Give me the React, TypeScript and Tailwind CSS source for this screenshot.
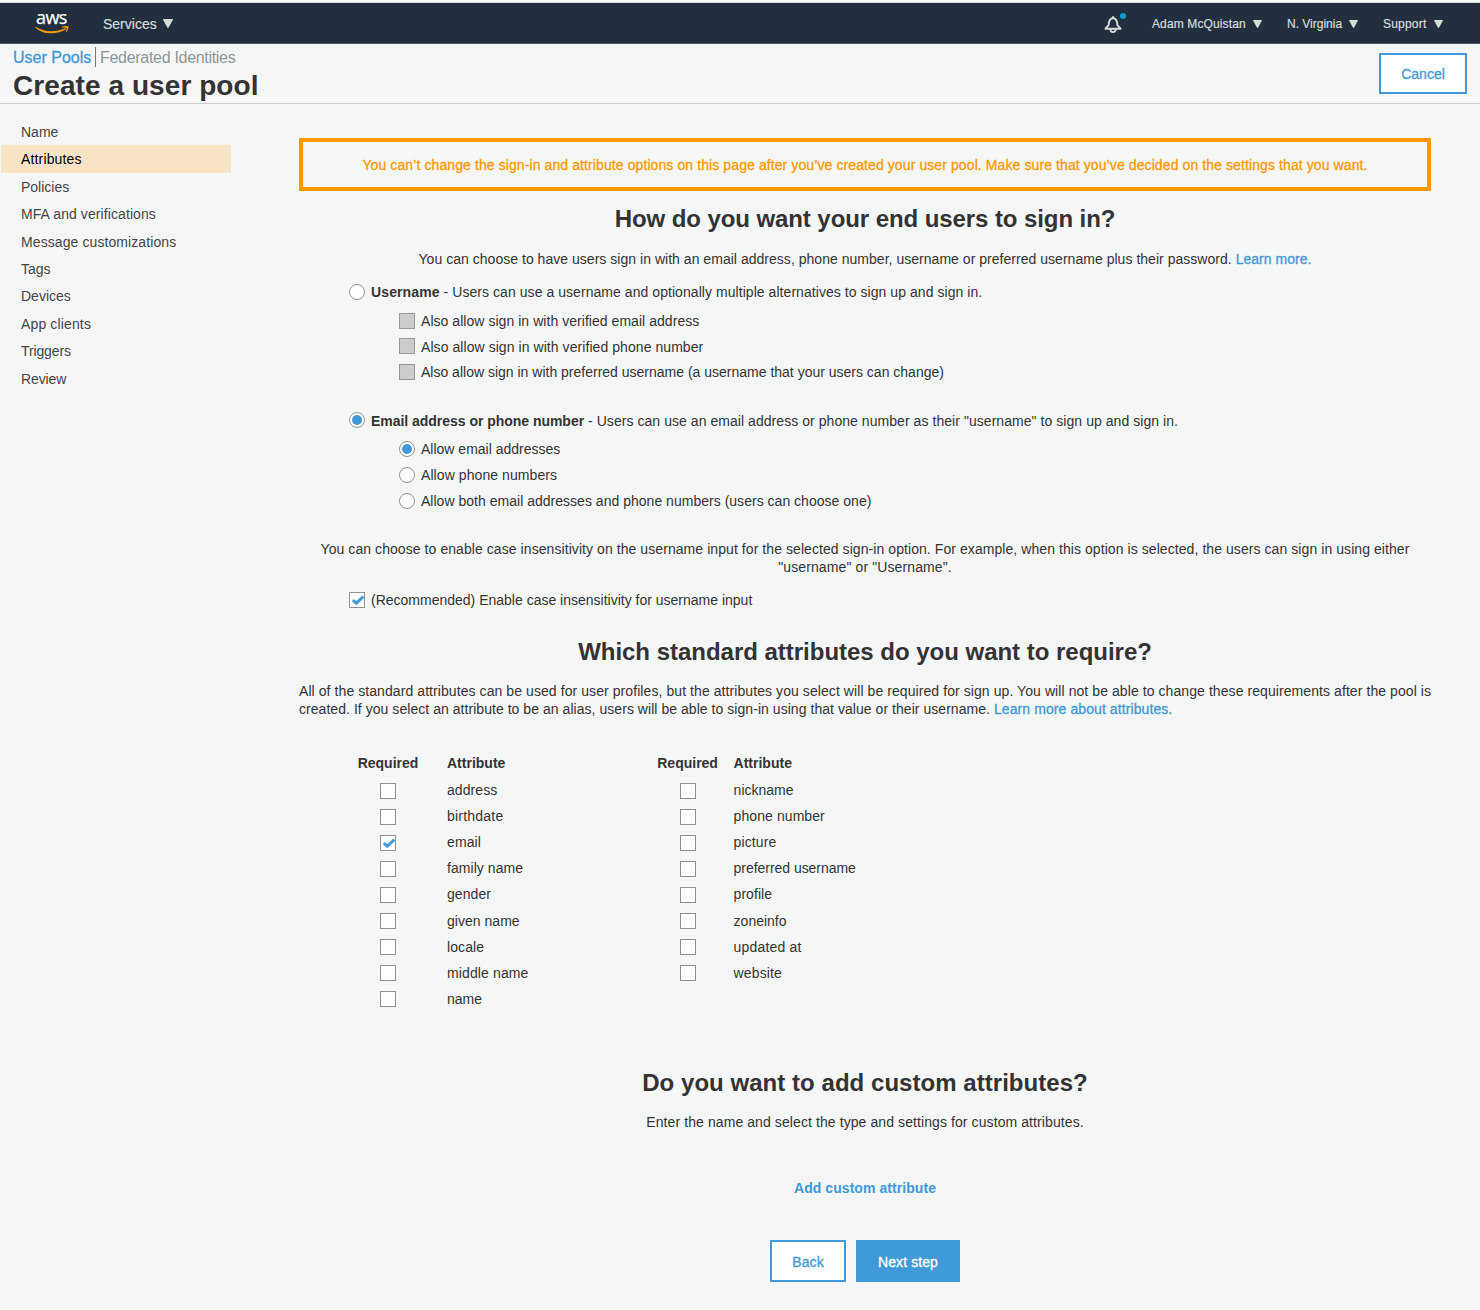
import React from 'react';

type Item = { label: string; track: string; checked?: boolean };

function Caret({ className }: { className: string }) {
  return (
    <svg viewBox="0 0 10 8" preserveAspectRatio="none" className={className} fill="currentColor">
      <path d="M0.6 0H9.4Q10.2 0 9.8 0.8L5.7 7.5Q5 8.4 4.3 7.5L0.2 0.8Q-0.2 0 0.6 0Z" />
    </svg>
  );
}

function Bell() {
  return (
    <svg width="22" height="22" viewBox="0 0 22 22" className="block">
      <path
        d="M3.4 14.7H18.6L15.4 11.2C15.2 7 14 4.2 11 4C8 4.2 6.8 7 6.6 11.2Z"
        fill="none"
        stroke="#d5dbdb"
        strokeWidth="1.9"
        strokeLinejoin="round"
      />
      <path d="M11 2.2V4" stroke="#d5dbdb" strokeWidth="2" />
      <path d="M8.4 15V15.6A2.6 2.5 0 0 0 13.6 15.6V15" fill="none" stroke="#d5dbdb" strokeWidth="1.9" />
    </svg>
  );
}

function AwsLogo() {
  return (
    <div className="h-[26px] w-[36px] shrink-0">
      <div className="h-[15px] pl-[1px] font-['Open_Sans',sans-serif] text-[18px] leading-[12px] font-medium tracking-[-0.6px] text-white [-webkit-text-stroke:0.25px]">
        aws
      </div>
      <svg width="36" height="10" viewBox="0 0 36 10" className="block">
        <path d="M0.7 0.7C9 6.1 20 6.7 30.2 2.2C31 1.9 31.5 2.7 30.8 3.3C22 9.2 8 8.8 0.5 1.4C0 0.9 0.3 0.5 0.7 0.7Z" fill="#f90" />
        <path d="M26.8 0.9C29 -0.3 33 -0.1 33.4 0.5C33.8 1.1 33 4.6 31.1 6.2C30.8 6.4 30.5 6.3 30.6 5.9C31.1 4.9 32 2.6 31.6 2C31.2 1.4 28.9 1.5 27.1 1.5C26.7 1.5 26.5 1.2 26.8 0.9Z" fill="#f90" />
      </svg>
    </div>
  );
}

function Check({ checked, disabled }: { checked?: boolean; disabled?: boolean }) {
  return (
    <span
      className={
        disabled
          ? 'block size-4 shrink-0 border border-[#999] bg-[#ccc]'
          : 'block size-4 shrink-0 border border-[#8d9494] bg-white'
      }
    >
      {checked && (
        <svg viewBox="0 0 14 14" className="block size-[14px]">
          <path d="M2.8 7.2L6.3 10.2L13.4 3.6" fill="none" stroke="#4099d8" strokeWidth="3" />
        </svg>
      )}
    </span>
  );
}

function Radio({ checked }: { checked?: boolean }) {
  return (
    <span className="flex size-4 shrink-0 items-center justify-center rounded-full border border-[#8d9494] bg-white">
      {checked && <span className="block size-[10px] rounded-full bg-[#4099d8]" />}
    </span>
  );
}

function AttributeTable({ items, cols }: { items: Item[]; cols: string }) {
  return (
    <div>
      <div className={`grid h-[27px] items-center font-bold ${cols}`}>
        <span className="text-center">Required</span>
        <span>Attribute</span>
      </div>
      {items.map((a) => (
        <div key={a.label} className={`grid h-[26.12px] items-center ${cols}`}>
          <span className="flex justify-center pt-[1.1px]">
            <Check checked={a.checked} />
          </span>
          <span className={a.track}>{a.label}</span>
        </div>
      ))}
    </div>
  );
}

const steps: Item[] = [
  { label: 'Name', track: '' },
  { label: 'Attributes', track: 'tracking-[0.15px]' },
  { label: 'Policies', track: '' },
  { label: 'MFA and verifications', track: 'tracking-[0.09px]' },
  { label: 'Message customizations', track: 'tracking-[0.09px]' },
  { label: 'Tags', track: '' },
  { label: 'Devices', track: '' },
  { label: 'App clients', track: 'tracking-[0.14px]' },
  { label: 'Triggers', track: 'tracking-[-0.13px]' },
  { label: 'Review', track: 'tracking-[-0.1px]' },
];

const left: Item[] = [
  { label: 'address', track: 'tracking-[0.08px]' },
  { label: 'birthdate', track: 'tracking-[0.22px]' },
  { label: 'email', track: 'tracking-[0.1px]', checked: true },
  { label: 'family name', track: 'tracking-[0.05px]' },
  { label: 'gender', track: 'tracking-[0.06px]' },
  { label: 'given name', track: 'tracking-[0.03px]' },
  { label: 'locale', track: 'tracking-[0.1px]' },
  { label: 'middle name', track: 'tracking-[0.12px]' },
  { label: 'name', track: '' },
];

const right: Item[] = [
  { label: 'nickname', track: '' },
  { label: 'phone number', track: 'tracking-[0.08px]' },
  { label: 'picture', track: 'tracking-[0.1px]' },
  { label: 'preferred username', track: 'tracking-[-0.04px]' },
  { label: 'profile', track: 'tracking-[0.04px]' },
  { label: 'zoneinfo', track: '' },
  { label: 'updated at', track: 'tracking-[0.17px]' },
  { label: 'website', track: 'tracking-[0.12px]' },
];

export default function App() {
  return (
    <div className="flex h-[1310px] w-[1480px] flex-col overflow-hidden bg-[#f5f7f7] font-['Liberation_Sans',Arial,sans-serif] text-[14px] leading-[18px] whitespace-nowrap text-[#333]">
      <div className="h-[3px] shrink-0 border-b border-[#dcdcdf] bg-[#f7f8f8]" />
      <header className="flex h-[41px] shrink-0 items-center border-b border-[#4d5560] bg-[#232f3e] pt-[2px] text-[#d5dbdb]">
        <div className="ml-[35px]">
          <AwsLogo />
        </div>
        <span className="ml-[32px] w-[60px] text-[14px] [-webkit-text-stroke:0.2px]">Services</span>
        <Caret className="mb-[2px] h-[9px] w-[10px]" />
        <div className="relative mt-[2px] ml-auto">
          <Bell />
          <span className="absolute top-[-1px] right-[-2px] size-[6px] rounded-full bg-[#00a1c9]" />
        </div>
        <span className="ml-[28px] w-[101px] text-[12px] tracking-[0.12px] [-webkit-text-stroke:0.2px]">Adam McQuistan</span>
        <Caret className="h-[8px] w-[9px]" />
        <span className="ml-[25px] w-[62px] text-[12px] [-webkit-text-stroke:0.2px]">N. Virginia</span>
        <Caret className="h-[8px] w-[9px]" />
        <span className="ml-[25px] w-[51px] text-[12px] tracking-[0.2px] [-webkit-text-stroke:0.2px]">Support</span>
        <Caret className="mr-[37px] h-[8px] w-[9px]" />
      </header>

      <div className="flex h-[60px] shrink-0 justify-between border-b border-[#ccc] pr-[13px] pl-[13px]">
        <div>
          <div className="mt-[3px] flex h-[20px] items-center text-[16px]">
            <span className="w-[82px] pt-[2px] text-[#4099d8] [-webkit-text-stroke:0.3px]">User Pools</span>
            <span className="h-full w-px bg-[#777]" />
            <span className="pt-[2px] pl-[4px] tracking-[-0.3px] text-[#8f9696]">Federated Identities</span>
          </div>
          <h1 className="mt-[3px] text-[28px] leading-[32px] font-bold tracking-[0.07px]">Create a user pool</h1>
        </div>
        <button className="mt-[9px] h-[41px] w-[88px] border-2 border-[#4099d8] bg-white text-[#4099d8] [-webkit-text-stroke:0.3px]">
          Cancel
        </button>
      </div>

      <div className="flex">
        <nav className="w-[231px] shrink-0 pt-[14.1px] pl-px text-[#444]">
          {steps.map((s) => (
            <div
              key={s.label}
              className={
                s.label === 'Attributes'
                  ? '-mt-[0.3px] flex h-[27.75px] items-center bg-[#f8e4c5] pt-[0.3px] pl-5 text-black'
                  : 'flex h-[27.45px] items-center pl-5'
              }
            >
              <span className={s.track}>{s.label}</span>
            </div>
          ))}
        </nav>

        <main className="ml-[68px] w-[1132px]">
          <div className="mt-[34px] flex h-[53px] items-center justify-center border-4 border-[#f90] tracking-[0.097px] text-[#f90] [-webkit-text-stroke:0.3px]">
            <span>
              You can’t change the sign-in and attribute options on this page after you’ve created your user pool. Make sure that you’ve decided on the settings that you want.
            </span>
          </div>

          <h2 className="mt-[12px] text-center text-[24px] leading-[32px] font-bold tracking-[-0.08px]">How do you want your end users to sign in?</h2>
          <p className="mt-[15px] text-center tracking-[0.029px]">
            <span>You can choose to have users sign in with an email address, phone number, username or preferred username plus their password. </span>
            <a className="text-[#4099d8] [-webkit-text-stroke:0.3px]">Learn more.</a>
          </p>

          <div className="mt-[15px] ml-[50px]">
            <div className="flex h-[18px] items-center gap-[6px]">
              <Radio />
              <span className="tracking-[0.055px]">
                <b className="tracking-[0.12px]">Username</b> - Users can use a username and optionally multiple alternatives to sign up and sign in.
              </span>
            </div>
            <div className="mt-[7px] ml-[50px]">
              <div className="flex h-[25.6px] items-center gap-[6px]">
                <Check disabled />
                <span className="tracking-[0.045px]">Also allow sign in with verified email address</span>
              </div>
              <div className="flex h-[25.6px] items-center gap-[6px]">
                <Check disabled />
                <span className="pt-px tracking-[0.065px]">Also allow sign in with verified phone number</span>
              </div>
              <div className="flex h-[25.6px] items-center gap-[6px]">
                <Check disabled />
                <span>Also allow sign in with preferred username (a username that your users can change)</span>
              </div>
            </div>

            <div className="mt-[27.2px] flex h-[18px] items-center gap-[6px]">
              <div className="pb-[2px]">
                <Radio checked />
              </div>
              <span className="tracking-[0.054px]">
                <b className="tracking-[-0.03px]">Email address or phone number</b> - Users can use an email address or phone number as their "username" to sign up and sign in.
              </span>
            </div>
            <div className="mt-[6px] ml-[50px]">
              <div className="flex h-[26px] items-center gap-[6px]">
                <Radio checked />
                <span>Allow email addresses</span>
              </div>
              <div className="flex h-[26px] items-center gap-[6px]">
                <Radio />
                <span className="tracking-[0.08px]">Allow phone numbers</span>
              </div>
              <div className="flex h-[26px] items-center gap-[6px]">
                <Radio />
                <span className="tracking-[0.02px]">Allow both email addresses and phone numbers (users can choose one)</span>
              </div>
            </div>
          </div>

          <p className="mt-[26px] text-center">
            <span className="tracking-[0.07px]">You can choose to enable case insensitivity on the username input for the selected sign-in option. For example, when this option is selected, the users can sign in using either</span>
            <br />
            <span className="tracking-[0.11px]">"username" or "Username".</span>
          </p>
          <div className="mt-[15px] ml-[50px] flex h-[18px] items-center gap-[6px]">
            <Check checked />
            <span>(Recommended) Enable case insensitivity for username input</span>
          </div>

          <h2 className="mt-[27px] text-center text-[24px] leading-[32px] font-bold tracking-[-0.02px]">Which standard attributes do you want to require?</h2>
          <p className="mt-[14px]">
            <span className="tracking-[0.077px]">All of the standard attributes can be used for user profiles, but the attributes you select will be required for sign up. You will not be able to change these requirements after the pool is</span>
            <br />
            <span className="tracking-[0.046px]">created. If you select an attribute to be an alias, users will be able to sign-in using that value or their username. </span>
            <a className="tracking-[0.09px] text-[#4099d8] [-webkit-text-stroke:0.3px]">Learn more about attributes.</a>
          </p>

          <div className="mt-[32px] flex h-[263px] pl-[58px]">
            <div className="w-[299.6px]">
              <AttributeTable items={left} cols="grid-cols-[62px_1fr] gap-x-[28px]" />
            </div>
            <AttributeTable items={right} cols="grid-cols-[62px_1fr] gap-x-[15px]" />
          </div>

          <h2 className="mt-[54px] text-center text-[24px] leading-[32px] font-bold tracking-[0.04px]">Do you want to add custom attributes?</h2>
          <p className="mt-[14px] text-center tracking-[0.09px]">Enter the name and select the type and settings for custom attributes.</p>
          <div className="mt-[48px] text-center font-bold tracking-[0.06px] text-[#4099d8]">Add custom attribute</div>
          <div className="mt-[43px] flex justify-center gap-[10px] tracking-[0.1px] [-webkit-text-stroke:0.3px]">
            <button className="h-[42px] w-[76px] border-2 border-[#4099d8] bg-white pt-[2px] text-[#4099d8]">Back</button>
            <button className="h-[42px] w-[104px] bg-[#4099d8] pt-[2px] text-white">Next step</button>
          </div>
        </main>
      </div>
    </div>
  );
}
